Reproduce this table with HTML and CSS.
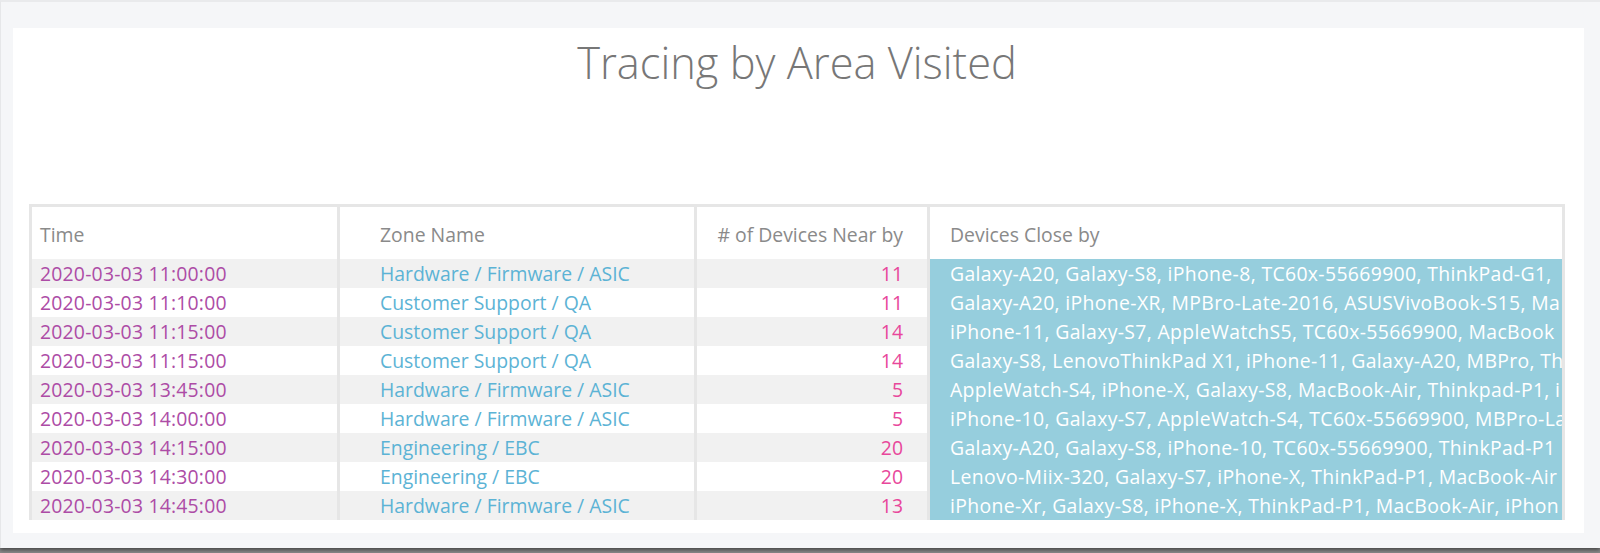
FILE: index.html
```html
<!DOCTYPE html>
<html>
<head>
<meta charset="utf-8">
<link rel="stylesheet" href="styles.css">
</head>
<body>
<div class="frame">
  <div class="panel">
    <h1 class="title">Tracing by Area Visited</h1>
    <table class="grid">
      <colgroup>
        <col class="c-time"><col class="c-zone"><col class="c-num"><col class="c-dev">
      </colgroup>
      <thead>
        <tr>
          <th class="time">Time</th>
          <th class="zone">Zone Name</th>
          <th class="num"># of Devices Near by</th>
          <th class="dev">Devices Close by</th>
        </tr>
      </thead>
      <tbody>
        <tr><td class="time">2020-03-03 11:00:00</td><td class="zone">Hardware / Firmware / ASIC</td><td class="num">11</td><td class="dev">Galaxy-A20, Galaxy-S8, iPhone-8, TC60x-55669900, ThinkPad-G1,</td></tr>
        <tr><td class="time">2020-03-03 11:10:00</td><td class="zone">Customer Support / QA</td><td class="num">11</td><td class="dev">Galaxy-A20, iPhone-XR, MPBro-Late-2016, ASUSVivoBook-S15, Ma</td></tr>
        <tr><td class="time">2020-03-03 11:15:00</td><td class="zone">Customer Support / QA</td><td class="num">14</td><td class="dev">iPhone-11, Galaxy-S7, AppleWatchS5, TC60x-55669900, MacBook</td></tr>
        <tr><td class="time">2020-03-03 11:15:00</td><td class="zone">Customer Support / QA</td><td class="num">14</td><td class="dev">Galaxy-S8, LenovoThinkPad X1, iPhone-11, Galaxy-A20, MBPro, Th</td></tr>
        <tr><td class="time">2020-03-03 13:45:00</td><td class="zone">Hardware / Firmware / ASIC</td><td class="num">5</td><td class="dev">AppleWatch-S4, iPhone-X, Galaxy-S8, MacBook-Air, Thinkpad-P1, i</td></tr>
        <tr><td class="time">2020-03-03 14:00:00</td><td class="zone">Hardware / Firmware / ASIC</td><td class="num">5</td><td class="dev">iPhone-10, Galaxy-S7, AppleWatch-S4, TC60x-55669900, MBPro-La</td></tr>
        <tr><td class="time">2020-03-03 14:15:00</td><td class="zone">Engineering / EBC</td><td class="num">20</td><td class="dev">Galaxy-A20, Galaxy-S8, iPhone-10, TC60x-55669900, ThinkPad-P1</td></tr>
        <tr><td class="time">2020-03-03 14:30:00</td><td class="zone">Engineering / EBC</td><td class="num">20</td><td class="dev">Lenovo-Miix-320, Galaxy-S7, iPhone-X, ThinkPad-P1, MacBook-Air</td></tr>
        <tr><td class="time">2020-03-03 14:45:00</td><td class="zone">Hardware / Firmware / ASIC</td><td class="num">13</td><td class="dev">iPhone-Xr, Galaxy-S8, iPhone-X, ThinkPad-P1, MacBook-Air, iPhon</td></tr>
      </tbody>
    </table>
  </div>
</div>
</body>
</html>
```

FILE: styles.css
```css
html, body {
  margin: 0;
  padding: 0;
  background: #8a8a8a;
  height: 553px;
  overflow: hidden;
}
body {
  font-family: "Open Sans", "Liberation Sans", sans-serif;
}
.frame {
  box-sizing: border-box;
  height: 548px;
  background: #f5f6f8;
  border-top: 2px solid #e9eaec;
  border-left: 1px solid #e6e7e9;
  padding: 26px 16px 15px 12px;
  box-shadow: 0 2px 4px rgba(0, 0, 0, 0.5);
}
.panel {
  box-sizing: border-box;
  height: 505px;
  background: #ffffff;
  padding: 0 19px 0 16px;
}
.title {
  margin: 0;
  padding: 6px 0 0 0;
  height: 176px;
  box-sizing: border-box;
  text-align: center;
  font-weight: 300;
  font-size: 43.4px;
  line-height: 58px;
  color: #777777;
}
.grid {
  width: 1536px;
  table-layout: fixed;
  border-collapse: collapse;
  border: 3px solid #e6e6e6;
  border-bottom: none;
  font-size: 19.4px;
}
.c-time { width: 308px; }
.c-zone { width: 357px; }
.c-num { width: 233px; }
.c-dev { width: auto; }
.grid th, .grid td {
  border-left: 3px solid #e6e6e6;
  border-right: 3px solid #e6e6e6;
  white-space: nowrap;
  overflow: hidden;
  padding: 0;
}
.grid th {
  height: 53px;
  font-weight: 400;
  color: #8a8a8a;
  text-align: left;
  vertical-align: middle;
  padding-top: 3px;
  box-sizing: border-box;
  background: #ffffff;
}
.grid td {
  height: 29px;
  line-height: 29px;
}
.grid tbody tr:nth-child(odd) td { background: #f1f1f1; }
.grid tbody tr:nth-child(even) td { background: #ffffff; }
.grid .time { padding-left: 8px; }
.grid td.time { letter-spacing: 0.2px; }
.grid .zone { padding-left: 40px; }
.grid .num { padding-right: 24px; text-align: right; }
.grid .dev { padding-left: 20px; }
.grid td.dev { letter-spacing: 0.35px; }
.grid td.time { color: #ad4ca6; }
.grid td.zone { color: #5cb3d5; }
.grid td.num { color: #e8479b; }
.grid tbody tr td.dev { background: #96cedd; color: #ffffff; }
```
